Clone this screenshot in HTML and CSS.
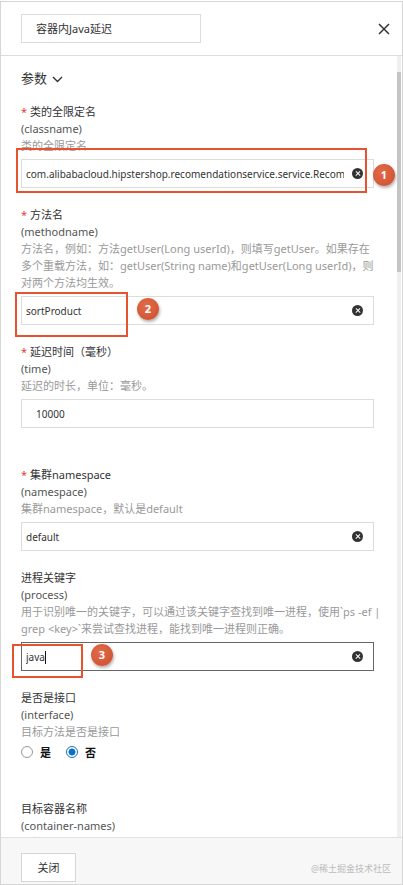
FILE: index.html
```html
<!DOCTYPE html>
<html lang="zh">
<head>
<meta charset="utf-8">
<link rel="stylesheet" href="styles.css">
</head>
<body>
<div class="panel">
  <header class="head">
    <div class="title-box">容器内Java延迟</div>
    <svg class="close" width="12" height="12" viewBox="0 0 12 12"><path d="M1 1L11 11M11 1L1 11" stroke="#333" stroke-width="1.5" fill="none"/></svg>
  </header>
  <div class="body">
    <div class="content">
      <div class="section-title">参数 <svg class="chev" width="11" height="7" viewBox="0 0 11 7"><path d="M1 1L5.5 5.5L10 1" stroke="#333" stroke-width="1.4" fill="none"/></svg></div>

      <div class="field">
        <div class="label"><span class="req">*</span> 类的全限定名</div>
        <div class="name">(classname)</div>
        <div class="desc">类的全限定名</div>
        <div class="input-wrap">
          <div class="input"><span class="val">com.alibabacloud.hipstershop.recomendationservice.service.RecommendationService</span><span class="clear"></span></div>
          <div class="mark mark1"></div>
          <div class="badge badge1">1</div>
        </div>
      </div>

      <div class="field">
        <div class="label"><span class="req">*</span> 方法名</div>
        <div class="name">(methodname)</div>
        <div class="desc">方法名，例如：方法getUser(Long userId)，则填写getUser。如果存在<br>多个重载方法，如：getUser(String name)和getUser(Long userId)，则<br>对两个方法均生效。</div>
        <div class="input-wrap">
          <div class="input"><span class="val">sortProduct</span><span class="clear"></span></div>
          <div class="mark mark2"></div>
          <div class="badge badge2">2</div>
        </div>
      </div>

      <div class="field field-gap">
        <div class="label"><span class="req">*</span> 延迟时间（毫秒）</div>
        <div class="name">(time)</div>
        <div class="desc">延迟的时长，单位：毫秒。</div>
        <div class="input-wrap">
          <div class="input input-num"><span class="val">10000</span></div>
        </div>
      </div>

      <div class="field">
        <div class="label"><span class="req">*</span> 集群namespace</div>
        <div class="name">(namespace)</div>
        <div class="desc">集群namespace，默认是default</div>
        <div class="input-wrap">
          <div class="input"><span class="val">default</span><span class="clear"></span></div>
        </div>
      </div>

      <div class="field">
        <div class="label">进程关键字</div>
        <div class="name">(process)</div>
        <div class="desc">用于识别唯一的关键字，可以通过该关键字查找到唯一进程，使用`ps -ef |<br>grep &lt;key&gt;`来尝试查找进程，能找到唯一进程则正确。</div>
        <div class="input-wrap">
          <div class="input input-focus"><span class="val">java<span class="caret"></span></span><span class="clear"></span></div>
          <div class="mark mark3"></div>
          <div class="badge badge3">3</div>
        </div>
      </div>

      <div class="field field-gap2">
        <div class="label">是否是接口</div>
        <div class="name">(interface)</div>
        <div class="desc">目标方法是否是接口</div>
        <div class="radios">
          <span class="radio"></span><span class="radio-label">是</span>
          <span class="radio radio-on"></span><span class="radio-label">否</span>
        </div>
      </div>

      <div class="field">
        <div class="label">目标容器名称</div>
        <div class="name">(container-names)</div>
        <div class="desc">目标容器名称，多个容器名称之间以逗号分隔，若不填写则默认为第一个容器。</div>
      </div>
    </div>
    <div class="scrollbar"><div class="thumb"></div></div>
  </div>
  <footer class="foot">
    <div class="btn">关闭</div>
    <div class="wm">@稀土掘金技术社区</div>
  </footer>
</div>
</body>
</html>
```

FILE: styles.css
```css
html, body {
  margin: 0;
  padding: 0;
  background: #fff;
}
body {
  padding-top: 1px;
  font-family: "Noto Sans", "Noto Sans CJK SC", sans-serif;
  font-size: 11px;
  color: #333;
}
.panel {
  box-sizing: border-box;
  width: 403px;
  height: 884px;
  border: 1px solid #d6d6d6;
  display: flex;
  flex-direction: column;
  overflow: hidden;
}
.head {
  height: 53px;
  flex: none;
  border-bottom: 1px solid #dcdcdc;
  display: flex;
  align-items: center;
  justify-content: space-between;
  padding: 0 12px 0 20px;
}
.title-box {
  box-sizing: border-box;
  width: 180px;
  height: 29px;
  border: 1px solid #dcdcdc;
  padding-left: 14px;
  line-height: 27px;
  font-size: 11px;
  color: #333;
}
.close {
  display: block;
}
.body {
  flex: 1;
  display: flex;
  min-height: 0;
}
.content {
  flex: 1;
  padding: 13px 22px 0 20px;
  overflow: hidden;
  min-width: 0;
}
.scrollbar {
  width: 4px;
  margin-right: 1px;
  background: #f0f0f0;
  flex: none;
}
.thumb {
  margin-top: 16px;
  height: 200px;
  background: #c4c4c4;
}
.section-title {
  font-size: 13px;
  line-height: 18px;
  height: 18px;
  margin-bottom: 16px;
  display: flex;
  align-items: center;
  gap: 5px;
}
.chev {
  margin-top: 2px;
}
.field {
  margin-bottom: 18px;
}
.field-gap {
  margin-bottom: 38px;
}
.field-gap2 {
  margin-bottom: 40px;
}
.label {
  line-height: 17px;
  color: #333;
}
.req {
  color: #e0403a;
}
.name {
  line-height: 17px;
  color: #555;
}
.desc {
  line-height: 17px;
  color: #999;
  white-space: nowrap;
}
.input-wrap {
  position: relative;
  margin-top: 5px;
  width: 353px;
}
.input {
  box-sizing: border-box;
  height: 29px;
  border: 1px solid #dcdcdc;
  display: flex;
  align-items: center;
  padding: 0 10px 0 4px;
  background: #fff;
  font-size: 10px;
}
.input-num {
  padding-left: 14px;
}
.input-focus {
  border-color: #666;
}
.val {
  flex: 1;
  min-width: 0;
  overflow: hidden;
  white-space: nowrap;
  color: #333;
}
.caret {
  display: inline-block;
  width: 1px;
  height: 13px;
  background: #111;
  vertical-align: -3px;
}
.clear {
  flex: none;
  width: 11px;
  height: 11px;
  border-radius: 50%;
  background: #333;
  margin-left: 8px;
  position: relative;
}
.clear::before, .clear::after {
  content: "";
  position: absolute;
  left: 2.5px;
  top: 4.85px;
  width: 6px;
  height: 1.3px;
  background: #fff;
  transform: rotate(45deg);
}
.clear::after {
  transform: rotate(-45deg);
}
.mark {
  position: absolute;
  box-sizing: border-box;
  border: 2px solid #e5542f;
}
.mark1 { left: -5px; top: -11px; width: 351px; height: 45px; }
.mark2 { left: -6px; top: -4px; width: 113px; height: 45px; }
.mark3 { left: -9px; top: 2px; width: 71px; height: 34px; }
.badge {
  position: absolute;
  width: 22px;
  height: 22px;
  border-radius: 50%;
  background: radial-gradient(circle at 40% 35%, #e26b48, #cc4e2e);
  box-shadow: 1px 2px 3px rgba(0,0,0,0.3);
  color: #fff;
  font-weight: bold;
  font-size: 11px;
  line-height: 22px;
  text-align: center;
}
.badge1 { left: 352px; top: 5px; }
.badge2 { left: 116px; top: 2px; }
.badge3 { left: 70px; top: 2px; }
.radios {
  margin-top: 3px;
  height: 17px;
  display: flex;
  align-items: center;
}
.radio {
  box-sizing: border-box;
  width: 12px;
  height: 12px;
  border-radius: 50%;
  border: 1px solid #999;
  background: #fff;
}
.radio-on {
  border-color: #0a6fc9;
  background: radial-gradient(circle, #0a6fc9 0 3.2px, #fff 3.8px);
}
.radio-label {
  margin-left: 7px;
  margin-right: 15px;
  color: #111;
  font-weight: bold;
}
.foot {
  flex: none;
  border-top: 1px solid #e0e0e0;
  background: #f7f7f7;
  display: flex;
  align-items: flex-start;
  justify-content: space-between;
  padding: 15px 11px 0 20px;
  box-sizing: border-box;
  height: 47px;
}
.btn {
  box-sizing: border-box;
  width: 55px;
  height: 29px;
  border: 1px solid #d6d6d6;
  background: #fff;
  text-align: center;
  line-height: 27px;
  color: #333;
}
.wm {
  font-size: 9px;
  color: #bbb;
  margin-top: 9px;
}
```
